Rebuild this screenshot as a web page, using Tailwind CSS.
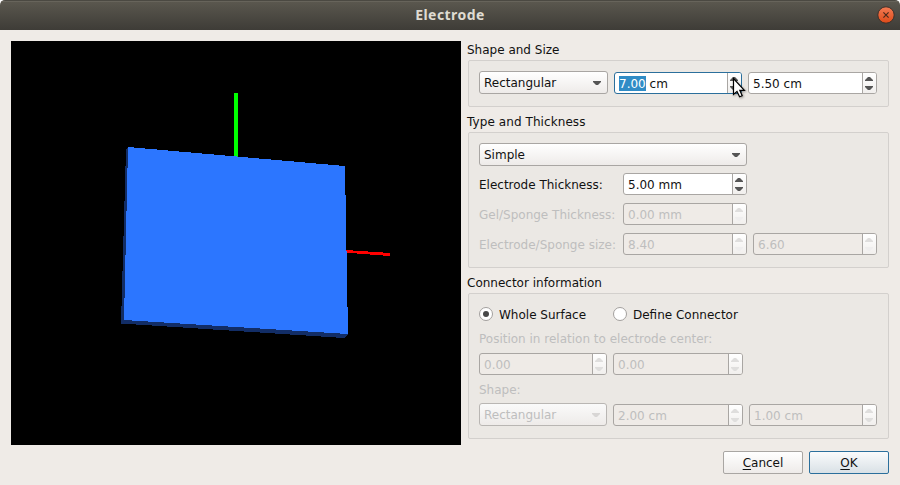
<!DOCTYPE html>
<html lang="en">
<head>
<meta charset="utf-8">
<title>Electrode</title>
<script src="https://cdn.jsdelivr.net/npm/@tailwindcss/browser@4"></script>
</head>
<body class="w-[900px] h-[485px] overflow-hidden bg-white text-[12px] text-[#111] font-['DejaVu_Sans',sans-serif]">
<svg class="hidden">
  <symbol id="drop" viewBox="0 0 8 4"><path d="M0 0H8V1L5 4H3L0 1Z" fill="currentColor"/></symbol>
  <symbol id="steps" viewBox="0 0 8 13"><path d="M3 0H5L8 3V4H0V3ZM0 9H8V10L5 13H3L0 10Z" fill="currentColor"/></symbol>
</svg>
<div class="relative w-[900px] h-[485px] bg-[#efebe7] rounded-t-[5px] overflow-hidden flex flex-col">
  <header class="h-[30px] shrink-0 relative flex items-center justify-center bg-linear-to-b from-[#5b584f] to-[#3e3c37] border-t border-[#4b4942] shadow-[inset_0_1px_0_#67645b]">
    <h1 class="font-['Noto_Sans',sans-serif] font-bold text-[14px] leading-[20px] text-[#dfdbd2] tracking-[0.45px] pb-[2px]">Electrode</h1>
    <svg class="absolute left-[877px] top-[5px]" width="18" height="18" viewBox="0 0 18 18">
      <defs><linearGradient id="cl" x2="0" y2="1"><stop stop-color="#f37c55"/><stop offset="1" stop-color="#de4a18"/></linearGradient></defs>
      <circle cx="9" cy="9" r="8.2" fill="url(#cl)" stroke="#3b302a" stroke-width="1"/>
      <path d="M6.4 6.4L11.6 11.6M11.6 6.4L6.4 11.6" stroke="#4b2a1c" stroke-width="1.2"/>
    </svg>
  </header>
  <main class="flex pl-[11px] pt-[11px] gap-[6px]">
    <svg class="bg-black shrink-0" width="450" height="404" viewBox="11 41 450 404" shape-rendering="crispEdges">
      <path d="M234 93H238V160H234Z" fill="#00ff00"/>
      <path d="M345 250L390 253V256L345 252.6Z" fill="#f00"/>
      <path d="M128 147L126 149L121 323.5L344 338L348 334.5L200 200Z" fill="#122d66"/>
      <path d="M128 147L345 166L348 334L124 320Z" fill="#2c76ff"/>
    </svg>
    <div class="w-[422px] flex flex-col">
      <h2 class="h-[19px] leading-[19px]">Shape and Size</h2>
      <section class="ml-px h-[47px] border border-[#d3d0cd] rounded-[2px] bg-[#ebe8e4] pl-[10px] pt-[10px] flex items-start">
        <div class="w-[129px] h-[23px] border border-[#a9a6a3] rounded-[3px] bg-linear-to-b from-white to-[#eeebe9] flex items-center justify-between pl-[4px] pr-[6px]"><span class="leading-[21px] pt-[2px]">Rectangular</span><svg class="text-[#555] mt-px" width="8" height="4"><use href="#drop"/></svg></div>
        <div class="ml-[6px] mt-px w-[128px] h-[22px] border border-[#2b6f9c] rounded-[3px] bg-white flex overflow-hidden">
          <div class="flex-1 pl-[4px] pt-[3px] leading-[16px] whitespace-pre"><span class="inline-block bg-[#308cc6] text-white h-[15px] leading-[16px]">7.00</span> cm</div>
          <div class="w-[14px] border-l border-[#a9a6a3] bg-linear-to-b from-white to-[#f1efed] pl-[2px] pt-[4px]"><svg class="text-[#555]" width="8" height="13"><use href="#steps"/></svg></div>
        </div>
        <div class="ml-[6px] mt-px w-[129px] h-[22px] border border-[#a9a6a3] rounded-[3px] bg-white flex overflow-hidden">
          <div class="flex-1 pl-[4px] leading-[22px]">5.50 cm</div>
          <div class="w-[14px] border-l border-[#a9a6a3] bg-linear-to-b from-white to-[#f1efed] pl-[2px] pt-[4px]"><svg class="text-[#555]" width="8" height="13"><use href="#steps"/></svg></div>
        </div>
      </section>

      <h2 class="mt-[6px] h-[19px] leading-[19px] tracking-[0.08px]">Type and Thickness</h2>
      <section class="ml-px h-[136px] border border-[#d3d0cd] rounded-[2px] bg-[#ebe8e4] pl-[10px] pt-[10px] flex flex-col">
        <div class="w-[268px] h-[23px] border border-[#a9a6a3] rounded-[3px] bg-linear-to-b from-white to-[#eeebe9] flex items-center justify-between pl-[4px] pr-[6px]"><span class="leading-[21px] pt-[2px]">Simple</span><svg class="text-[#555] mt-px" width="8" height="4"><use href="#drop"/></svg></div>
        <div class="mt-[7px] flex h-[22px]">
          <label class="w-[144px] leading-[24px] whitespace-nowrap">Electrode Thickness:</label>
          <div class="w-[124px] h-[22px] border border-[#a9a6a3] rounded-[3px] bg-white flex overflow-hidden">
            <div class="flex-1 pl-[4px] leading-[22px]">5.00 mm</div>
            <div class="w-[14px] border-l border-[#a9a6a3] bg-linear-to-b from-white to-[#f1efed] pl-[2px] pt-[4px]"><svg class="text-[#555]" width="8" height="13"><use href="#steps"/></svg></div>
          </div>
        </div>
        <div class="mt-[8px] flex h-[22px] text-[#bebebe]">
          <label class="w-[144px] leading-[24px] whitespace-nowrap">Gel/Sponge Thickness:</label>
          <div class="w-[124px] h-[22px] border border-[#a9a6a3] rounded-[3px] bg-[#efebe7] flex overflow-hidden">
            <div class="flex-1 pl-[4px] leading-[22px]">0.00 mm</div>
            <div class="w-[14px] border-l border-[#a9a6a3] bg-linear-to-b from-white to-[#f1efed] pl-[2px] pt-[4px]"><svg width="8" height="13"><path d="M3 0H5L8 3V4H0V3Z" fill="#dfdedd"/><path d="M0 9H8V10L5 13H3L0 10Z" fill="#efeeee"/></svg></div>
          </div>
        </div>
        <div class="mt-[8px] flex h-[22px] text-[#bebebe]">
          <label class="w-[144px] leading-[24px] whitespace-nowrap">Electrode/Sponge size:</label>
          <div class="w-[124px] h-[22px] border border-[#a9a6a3] rounded-[3px] bg-[#efebe7] flex overflow-hidden">
            <div class="flex-1 pl-[4px] leading-[22px]">8.40</div>
            <div class="w-[14px] border-l border-[#a9a6a3] bg-linear-to-b from-white to-[#f1efed] pl-[2px] pt-[4px]"><svg width="8" height="13"><path d="M3 0H5L8 3V4H0V3Z" fill="#dfdedd"/><path d="M0 9H8V10L5 13H3L0 10Z" fill="#efeeee"/></svg></div>
          </div>
          <div class="ml-[6px] w-[124px] h-[22px] border border-[#a9a6a3] rounded-[3px] bg-[#efebe7] flex overflow-hidden">
            <div class="flex-1 pl-[4px] leading-[22px]">6.60</div>
            <div class="w-[14px] border-l border-[#a9a6a3] bg-linear-to-b from-white to-[#f1efed] pl-[2px] pt-[4px]"><svg width="8" height="13"><path d="M3 0H5L8 3V4H0V3Z" fill="#dfdedd"/><path d="M0 9H8V10L5 13H3L0 10Z" fill="#efeeee"/></svg></div>
          </div>
        </div>
      </section>

      <h2 class="mt-[6px] h-[19px] leading-[19px]">Connector information</h2>
      <section class="ml-px h-[146px] border border-[#d3d0cd] rounded-[2px] bg-[#ebe8e4] pl-[10px] pt-[10px] flex flex-col">
        <div class="flex h-[20px] items-center">
          <label class="w-[134px] flex items-center gap-[6px] whitespace-nowrap"><span class="w-[14px] h-[14px] shrink-0 rounded-full border border-[#a3a09e] bg-white flex items-center justify-center"><i class="w-[6px] h-[6px] rounded-full bg-[#484848]"></i></span><span class="leading-[20px] pt-[2px]">Whole Surface</span></label>
          <label class="flex items-center gap-[6px] whitespace-nowrap"><span class="w-[14px] h-[14px] shrink-0 rounded-full border border-[#a3a09e] bg-white"></span><span class="leading-[20px] pt-[2px]">Define Connector</span></label>
        </div>
        <p class="mt-[6px] h-[23px] leading-[19px] text-[#bebebe]">Position in relation to electrode center:</p>
        <div class="flex h-[22px] text-[#bebebe]">
          <div class="w-[128px] h-[22px] border border-[#a9a6a3] rounded-[3px] bg-[#efebe7] flex overflow-hidden">
            <div class="flex-1 pl-[4px] leading-[22px]">0.00</div>
            <div class="w-[14px] border-l border-[#a9a6a3] bg-linear-to-b from-white to-[#f1efed] pl-[2px] pt-[4px]"><svg class="text-[#dfdedd]" width="8" height="13"><use href="#steps"/></svg></div>
          </div>
          <div class="ml-[6px] w-[130px] h-[22px] border border-[#a9a6a3] rounded-[3px] bg-[#efebe7] flex overflow-hidden">
            <div class="flex-1 pl-[4px] leading-[22px]">0.00</div>
            <div class="w-[14px] border-l border-[#a9a6a3] bg-linear-to-b from-white to-[#f1efed] pl-[2px] pt-[4px]"><svg class="text-[#dfdedd]" width="8" height="13"><use href="#steps"/></svg></div>
          </div>
        </div>
        <p class="mt-[6px] h-[22px] leading-[19px] text-[#bebebe]">Shape:</p>
        <div class="flex h-[23px] text-[#bebebe]">
          <div class="w-[128px] h-[23px] border border-[#b9b6b3] rounded-[3px] bg-linear-to-b from-[#fafafa] to-[#eeebe9] flex items-center justify-between pl-[4px] pr-[6px]"><span class="leading-[21px] pt-[2px]">Rectangular</span><svg class="text-[#d8d6d5] mt-px" width="8" height="4"><use href="#drop"/></svg></div>
          <div class="ml-[6px] mt-px w-[130px] h-[22px] border border-[#a9a6a3] rounded-[3px] bg-[#efebe7] flex overflow-hidden">
            <div class="flex-1 pl-[4px] leading-[22px]">2.00 cm</div>
            <div class="w-[14px] border-l border-[#a9a6a3] bg-linear-to-b from-white to-[#f1efed] pl-[2px] pt-[4px]"><svg class="text-[#dfdedd]" width="8" height="13"><use href="#steps"/></svg></div>
          </div>
          <div class="ml-[6px] mt-px w-[128px] h-[22px] border border-[#a9a6a3] rounded-[3px] bg-[#efebe7] flex overflow-hidden">
            <div class="flex-1 pl-[4px] leading-[22px]">1.00 cm</div>
            <div class="w-[14px] border-l border-[#a9a6a3] bg-linear-to-b from-white to-[#f1efed] pl-[2px] pt-[4px]"><svg class="text-[#dfdedd]" width="8" height="13"><use href="#steps"/></svg></div>
          </div>
        </div>
      </section>
      <div class="mt-[12px] flex justify-end gap-[6px]">
        <button class="w-[80px] h-[23px] border border-[#a9a6a3] rounded-[2px] bg-linear-to-b from-white to-[#eeebe9] leading-[20px] pt-px pb-px"><span class="underline underline-offset-[2px] decoration-1">C</span>ancel</button>
        <button class="w-[80px] h-[23px] border border-[#2b6f9c] rounded-[2px] bg-linear-to-b from-[#fafbfc] to-[#d9e1e6] leading-[20px] pt-px pb-px"><span class="underline underline-offset-[2px] decoration-1">O</span>K</button>
      </div>
    </div>
  </main>
  <svg class="absolute left-[731px] top-[76px] drop-shadow-[1px_1px_1px_rgba(0,0,0,0.35)]" width="16" height="24" viewBox="0 0 16 24"><path d="M2.5 2.5V18.5L6 15.4L8.6 20.8L11.2 19.7L8.8 14.3H13.4Z" fill="#fff" stroke="#000" stroke-width="1.2"/></svg>
</div>
</body>
</html>
